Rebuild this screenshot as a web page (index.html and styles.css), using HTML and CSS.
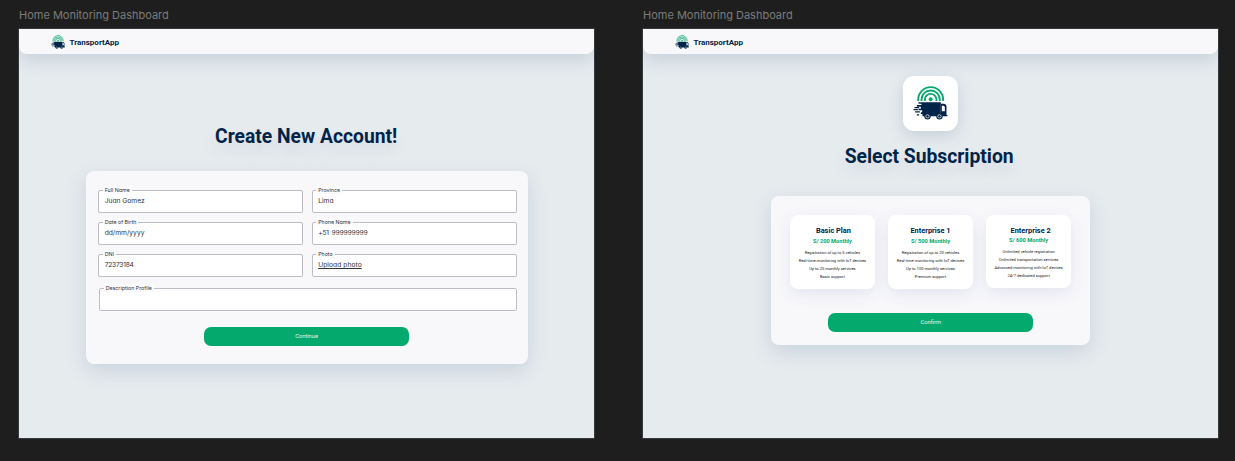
FILE: index.html
```html
<!DOCTYPE html>
<html lang="en">
<head>
<meta charset="utf-8">
<title>TransportApp</title>
<link rel="stylesheet" href="styles.css">
</head>
<body>
<svg class="defs" width="0" height="0" aria-hidden="true">
  <symbol id="logo" viewBox="0 0 104 102">
    <g fill="none" stroke="#04a96d" stroke-width="5.600">
      <path d="M15 45V41a37.500 37.500 0 0 1 75 0v4"/>
      <path d="M25 45V41a27.500 27.500 0 0 1 55 0v4"/>
      <path d="M35 45V41a17.500 17.500 0 0 1 35 0v4"/>
    </g>
    <circle cx="52.500" cy="40" r="6" fill="#04a96d"/>
    <g fill="#022448">
      <path d="M16 49H83V91H28V84H23V79H27V73H16V68H23V62H11V57H25V53H16z"/>
      <path d="M83 53H93Q99 54 100 61V87H103V91H83z"/>
      <path d="M4 63H18V66.500H4zM1 69H14V72.500H1zM6 76H20V79.500H6zM11 85H18V88.500H11z"/>
      <circle cx="43" cy="91" r="9.500"/><circle cx="79" cy="91" r="9.500"/>
    </g>
    <path d="M86 59H91Q95 59 95 65V76H86z" fill="#fff"/>
    <g fill="none" stroke="#fff" stroke-width="2"><circle cx="43" cy="91" r="5"/><circle cx="79" cy="91" r="5"/></g>
  </symbol>
</svg>
<main class="canvas">
  <section class="artboard">
    <div class="caption">Home Monitoring Dashboard</div>
    <div class="frame">
      <header class="topbar"><svg class="mark"><use href="#logo"/></svg><span class="brand">TransportApp</span></header>
      <h1 class="title title-account">Create New Account!</h1>
      <form class="panel account">
        <div class="fields">
          <div class="field"><span class="label">Full Name</span><span class="value">Juan Gomez</span></div>
          <div class="field"><span class="label">Province</span><span class="value">Lima</span></div>
          <div class="field"><span class="label">Date of Birth</span><span class="value">dd/mm/yyyy</span></div>
          <div class="field"><span class="label">Phone Name</span><span class="value phone">+51 999999999</span></div>
          <div class="field"><span class="label">DNI</span><span class="value dni">72373184</span></div>
          <div class="field"><span class="label">Photo</span><span class="value upload">Upload photo</span></div>
        </div>
        <div class="field description"><span class="label">Description Profile</span></div>
        <button class="action" type="button">Continue</button>
      </form>
    </div>
  </section>
  <section class="artboard">
    <div class="caption">Home Monitoring Dashboard</div>
    <div class="frame">
      <header class="topbar"><svg class="mark"><use href="#logo"/></svg><span class="brand">TransportApp</span></header>
      <div class="tile"><svg class="tile-logo"><use href="#logo"/></svg></div>
      <h1 class="title title-plans">Select Subscription</h1>
      <div class="panel subscription">
        <div class="plans">
          <article class="plan"><h2>Basic Plan</h2><p class="price">S/ 200 Monthly</p><ul><li>Registration of up to 5 vehicles</li><li>Real-time monitoring with IoT devices</li><li>Up to 25 monthly services</li><li>Basic support</li></ul></article>
          <article class="plan plan-mid"><h2>Enterprise 1</h2><p class="price">S/ 500 Monthly</p><ul><li>Registration of up to 20 vehicles</li><li>Real-time monitoring with IoT devices</li><li>Up to 100 monthly services</li><li>Premium support</li></ul></article>
          <article class="plan plan-last"><h2>Enterprise 2</h2><p class="price">S/ 600 Monthly</p><ul><li>Unlimited vehicle registration</li><li>Unlimited transportation services</li><li>Advanced monitoring with IoT devices</li><li>24/7 dedicated support</li></ul></article>
        </div>
        <button class="action confirm" type="button">Confirm</button>
      </div>
    </div>
  </section>
</main>
</body>
</html>
```
FILE: styles.css
```css
* { box-sizing: border-box; }
html, body { height: 100%; }
body { margin: 0; background: #1e1e1e; overflow: hidden; font-family: Roboto, sans-serif; color: #022448; }
h1, h2, p, ul { margin: 0; padding: 0; }
ul { list-style: none; }
.defs { position: absolute; }
.canvas { display: flex; gap: 48.7px; padding-left: 19px; }
.artboard { width: 575.3px; flex: none; }
.caption { height: 29px; padding-top: 8px; font: 11px/15px Inter, sans-serif; color: #7c7c7c; white-space: nowrap; }
.frame { height: 409px; background: #e6ebee; overflow: hidden; outline: 1px solid #38393b; display: flex; flex-direction: column; align-items: center; }
.topbar { width: 100%; height: 25.4px; flex: none; display: flex; align-items: center; gap: 4.5px; padding: 1.5px 0 0 32px; background: #f8f8fb; border-radius: 0 0 8px 8px; box-shadow: 0 6px 18px rgba(40, 75, 125, .17); }
.mark { width: 14px; height: 14px; }
.brand { padding-top: 2px; font-size: 8px; line-height: 10px; font-weight: 700; }
.title { font-size: 19.3px; line-height: 24px; font-weight: 700; white-space: nowrap; text-shadow: 0 8px 16px rgba(40, 75, 125, .12); }
.title-account { margin-top: 70.3px; margin-right: 1px; }
.panel { background: #f8f8fb; border-radius: 8px; box-shadow: 0 7px 20px rgba(40, 75, 125, .15); flex: none; display: flex; flex-direction: column; }
.account { width: 442px; height: 193.5px; margin-top: 22.3px; padding: 19px 11px 0 12.5px; }
.fields { display: grid; grid-template-columns: 205px 205px; column-gap: 8.5px; row-gap: 9px; }
.field { position: relative; height: 23px; border: 1px solid #bebdc5; border-radius: 2px; background: #fff; padding: 6.5px 0 0 5.5px; font-family: Inter, sans-serif; font-feature-settings: "cv11"; color: #333; }
.label { position: absolute; left: 3.5px; top: -5px; padding: 0 2px; background: #fbfbfd; font-size: 5.3px; line-height: 8px; white-space: nowrap; }
.value { display: block; width: max-content; font-size: 6.7px; line-height: 9px; white-space: nowrap; }
.phone { letter-spacing: -.15px; word-spacing: .8px; }
.dni { letter-spacing: -.25px; }
.upload { font-size: 6.7px; letter-spacing: .05px; text-decoration: underline; }
.description { margin: 11px 0 0 1px; }
.action { width: 205px; height: 19px; margin: 16px 0 0 106px; padding: 0; border: 0; border-radius: 7px; background: #04a96d; color: #e8f8f1; font: 5.4px/19px Inter, sans-serif; }
.tile { width: 55.4px; height: 55.4px; margin-top: 21.3px; flex: none; background: #fff; border-radius: 11px; box-shadow: 0 5px 16px rgba(40, 75, 125, .17); padding: 10.3px 0 0 10.5px; }
.tile-logo { display: block; width: 35px; height: 34px; }
.title-plans { margin-top: 13.7px; margin-right: 3px; }
.subscription { width: 319px; height: 149.2px; margin-top: 27.4px; padding: 19.2px 18px 0 18.5px; }
.plans { display: flex; gap: 12.5px; }
.plan { width: 85.6px; height: 73.5px; flex: none; background: #fff; border-radius: 8px; box-shadow: 0 5px 16px rgba(50, 70, 140, .1); text-align: center; padding-top: 11px; }
.plan h2 { padding-left: 2px; font-size: 7.4px; line-height: 10px; font-weight: 700; }
.price { margin-top: .5px; font-size: 5.7px; line-height: 9px; font-weight: 700; color: #04a96d; }
.plan ul { margin-top: 3px; font-size: 4.05px; line-height: 8px; color: #222; white-space: nowrap; }
.plan.plan-mid h2 { padding-left: 0; }
.plan-last { margin-top: -.5px; }
.plan.plan-last h2 { padding-left: 4px; }
.confirm { margin: 24.2px 0 0 38.7px; font-family: Roboto, sans-serif; font-size: 5.8px; }
```
